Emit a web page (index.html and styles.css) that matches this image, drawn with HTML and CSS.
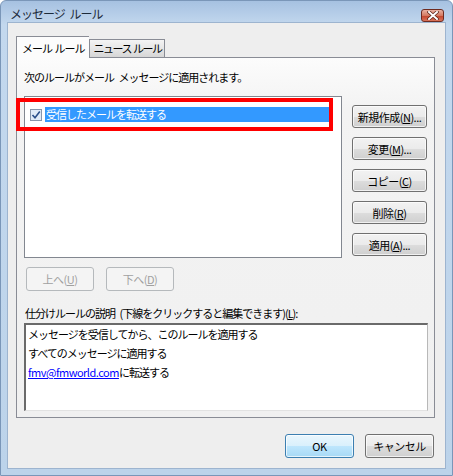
FILE: index.html
```html
<!DOCTYPE html>
<html lang="ja">
<head>
    <meta charset="UTF-8">
    <title>メッセージ ルール</title>
    <link rel="stylesheet" href="styles.css">
</head>
<body>
    <div class="window">
        <div class="titlebar">
            <span class="title">メッセージ ルール</span>
            <button class="close-btn" aria-label="閉じる">
                <svg width="12" height="9" viewBox="0 0 12 9">
                    <path d="M2 1 L10 8 M10 1 L2 8" stroke="#5a2418" stroke-width="3.4" stroke-linecap="square"/>
                    <path d="M2 1 L10 8 M10 1 L2 8" stroke="#fff" stroke-width="2" stroke-linecap="square"/>
                </svg>
            </button>
        </div>
        <div class="client">
            <div class="tabs">
                <div class="tab active">メール ルール</div>
                <div class="tab">ニュース ルール</div>
            </div>
            <div class="panel">
                <div class="caption">次のルールがメール メッセージに適用されます。</div>
                <div class="rules-row">
                    <div class="rules-wrap">
                        <div class="listbox">
                            <div class="rule-item">
                                <span class="checkbox">
                                    <svg width="12" height="12" viewBox="0 0 12 12">
                                        <rect x="0.5" y="0.5" width="11" height="11" fill="#dfeaf7" stroke="#8796ab"/>
                                        <path d="M2.5 6 L5 8.8 L9.8 2.6" fill="none" stroke="#2a4f8a" stroke-width="1.6"/>
                                    </svg>
                                </span>
                                <span class="rule-name">受信したメールを転送する</span>
                            </div>
                        </div>
                        <div class="mark"></div>
                    </div>
                    <div class="side-buttons">
                        <button class="btn">新規作成(<u>N</u>)...</button>
                        <button class="btn">変更(<u>M</u>)...</button>
                        <button class="btn">コピー(<u>C</u>)</button>
                        <button class="btn">削除(<u>R</u>)</button>
                        <button class="btn">適用(<u>A</u>)...</button>
                    </div>
                </div>
                <div class="move-row">
                    <button class="btn move" disabled>上へ(<u>U</u>)</button>
                    <button class="btn move" disabled>下へ(<u>D</u>)</button>
                </div>
                <div class="caption desc-label">仕分けルールの説明 (下線をクリックすると編集できます)(<u>L</u>):</div>
                <div class="description">
                    <p>メッセージを受信してから、このルールを適用する</p>
                    <p>すべてのメッセージに適用する</p>
                    <p><a href="#">fmv@fmworld.com</a>に転送する</p>
                </div>
            </div>
            <div class="footer">
                <button class="btn dialog default">OK</button>
                <button class="btn dialog">キャンセル</button>
            </div>
        </div>
    </div>
</body>
</html>
```

FILE: styles.css
```css
body {
    margin: 0;
    font-family: "Noto Sans CJK JP", "Noto Sans", sans-serif;
    font-size: 11px;
    color: #000;
    background: #fff;
}
.window {
    width: 453px;
    height: 476px;
    box-sizing: border-box;
    border: 1px solid #7a96b8;
    border-radius: 6px 6px 0 0;
    padding: 0 6px 6px 6px;
    background: linear-gradient(#a6c1e1, #c3d8ee 24px, #bcd3ea);
}
.titlebar {
    height: 21px;
    display: flex;
    align-items: center;
    justify-content: space-between;
}
.title {
    padding-left: 3px;
    padding-top: 4px;
    font-size: 12px;
    letter-spacing: -1px;
    word-spacing: 3px;
    color: #1c2a3a;
}
.close-btn {
    width: 23px;
    height: 13px;
    margin: 8px 2px 0 0;
    padding: 0;
    display: flex;
    align-items: center;
    justify-content: center;
    border: 1px solid #6e2b20;
    border-radius: 3px;
    background: linear-gradient(#eab2a2, #d47a62 50%, #c2432b 51%, #d9735a);
}
.client {
    height: 447px;
    box-sizing: border-box;
    border: 1px solid #9db4cf;
    background: #eeeeee;
    padding: 13px 10px 0 8px;
}
.tabs {
    display: flex;
    align-items: flex-end;
    height: 21px;
}
.tab {
    height: 18px;
    box-sizing: border-box;
    padding: 0 3px;
    border: 1px solid #898c95;
    border-bottom: none;
    line-height: 17px;
    letter-spacing: -1.5px;
    word-spacing: 1px;
    white-space: nowrap;
    background: linear-gradient(#f4f4f4, #e6e6e6 50%, #d6d6d6);
}
.tab.active {
    height: 22px;
    margin-bottom: -1px;
    padding: 0 5px;
    line-height: 22px;
    letter-spacing: -1px;
    border-right: none;
    background: #fcfcfc;
}
.panel {
    height: 361px;
    box-sizing: border-box;
    border: 1px solid #898c95;
    padding: 12px 7px 0 7px;
    background: linear-gradient(#fcfcfc, #f3f3f3 50px, #f0f0f0);
}
.caption {
    height: 14px;
    line-height: 14px;
    letter-spacing: -1px;
    word-spacing: 3px;
    white-space: nowrap;
}
.rules-row {
    display: flex;
    margin-top: 12px;
    gap: 10px;
}
.rules-wrap {
    position: relative;
}
.listbox {
    width: 318px;
    height: 162px;
    box-sizing: border-box;
    border: 1px solid #828790;
    background: #fff;
    padding: 10px 0 0 5px;
}
.rule-item {
    display: flex;
    align-items: center;
    gap: 3px;
}
.checkbox {
    display: flex;
}
.rule-name {
    width: 283px;
    height: 15px;
    line-height: 15px;
    padding-left: 1px;
    background: #3399ff;
    color: #fff;
    letter-spacing: -1px;
}
/* red frame around the forwarding rule */
.mark {
    position: absolute;
    left: -8px;
    top: 2px;
    width: 317px;
    height: 33px;
    box-sizing: border-box;
    border: 4px solid #ff0000;
}
.side-buttons {
    display: flex;
    flex-direction: column;
    gap: 9px;
    padding-top: 9px;
}
.btn {
    height: 23px;
    box-sizing: border-box;
    padding: 0;
    font-family: inherit;
    font-size: 11px;
    letter-spacing: -0.5px;
    color: #000;
    border: 1px solid #707070;
    border-radius: 3px;
    background: linear-gradient(#f2f2f2, #ebebeb 50%, #dddddd 51%, #cfcfcf);
    box-shadow: inset 0 0 0 1px rgba(255,255,255,0.7);
}
.side-buttons .btn {
    width: 75px;
}
.move-row {
    display: flex;
    gap: 12px;
    margin-top: 9px;
    padding-left: 2px;
}
.btn.move {
    width: 68px;
    height: 24px;
    color: #a0a0a0;
    border-color: #b5b9bc;
    background: #f4f4f4;
    box-shadow: none;
}
.desc-label {
    margin-top: 15px;
    padding-left: 1px;
}
.description {
    margin-top: 3px;
    height: 88px;
    width: 404px;
    box-sizing: border-box;
    border-top: 2px solid #6a6a6a;
    border-left: 2px solid #6a6a6a;
    border-right: 1px solid #b8b8b8;
    border-bottom: 1px solid #e2e2e2;
    background: #fff;
    padding: 2px 0 0 2px;
}
.description p {
    margin: 0 0 5px 0;
    height: 14px;
    line-height: 14px;
    letter-spacing: -1px;
}
.description a {
    color: #0000ff;
    letter-spacing: -0.5px;
}
.footer {
    display: flex;
    justify-content: flex-end;
    gap: 11px;
    margin-top: 16px;
    padding-right: 1px;
}
.btn.dialog {
    width: 69px;
    height: 24px;
}
.btn.default {
    border-color: #3c7fb1;
    background: linear-gradient(#eaf6fd, #d9f0fc 50%, #bee6fd 51%, #a7d9f5);
}
```
